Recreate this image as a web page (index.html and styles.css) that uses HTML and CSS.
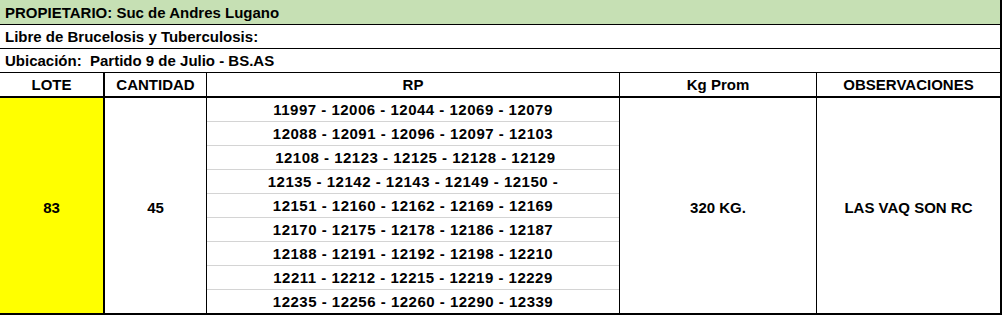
FILE: index.html
```html
<!DOCTYPE html>
<html lang="es">
<head>
<meta charset="utf-8">
<title>Lote 83</title>
<link rel="stylesheet" href="styles.css">
</head>
<body>
<div class="sheet">
  <div class="title green first">PROPIETARIO: Suc de Andres Lugano</div>
  <div class="title">Libre de Brucelosis y Tuberculosis:</div>
  <div class="title">Ubicación:&nbsp; Partido 9 de Julio - BS.AS</div>

  <div class="cols head">
    <div class="cell c-lote">LOTE</div>
    <div class="cell c-cant">CANTIDAD</div>
    <div class="cell c-rp">RP</div>
    <div class="cell c-kg">Kg Prom</div>
    <div class="cell c-obs">OBSERVACIONES</div>
  </div>

  <div class="cols data">
    <div class="cell c-lote big yellow">83</div>
    <div class="cell c-cant big">45</div>
    <div class="rp-list">
      <div class="rp">11997 - 12006 - 12044 - 12069 - 12079</div>
      <div class="rp">12088 - 12091 - 12096 - 12097 - 12103</div>
      <div class="rp">&nbsp;12108 - 12123 - 12125 - 12128 - 12129</div>
      <div class="rp">12135 - 12142 - 12143 - 12149 - 12150 -</div>
      <div class="rp">12151 - 12160 - 12162 - 12169 - 12169</div>
      <div class="rp">12170 - 12175 - 12178 - 12186 - 12187</div>
      <div class="rp">12188 - 12191 - 12192 - 12198 - 12210</div>
      <div class="rp">12211 - 12212 - 12215 - 12219 - 12229</div>
      <div class="rp">12235 - 12256 - 12260 - 12290 - 12339</div>
    </div>
    <div class="cell c-kg big">320 KG.</div>
    <div class="cell c-obs big">LAS VAQ SON RC</div>
  </div>
</div>
</body>
</html>
```
FILE: styles.css
```css
html, body {
  margin: 0;
  padding: 0;
  background: #ffffff;
}

.sheet {
  width: 1002px;
  display: flex;
  flex-direction: column;
  font-family: "Liberation Sans", Arial, sans-serif;
  font-weight: bold;
  font-size: 15px;
  color: #000;
}

.title {
  box-sizing: border-box;
  height: 24px;
  padding: 1px 0 0 5px;
  line-height: 22px;
  border-bottom: 1px solid #000;
  border-right: 2px solid #000;
  white-space: pre;
}

.title.first {
  height: 25px;
  padding-top: 2px;
}

.green {
  background: #c6e0b4;
}

.cols {
  display: grid;
  grid-template-columns: 105px 102px 413px 197px 185px;
}

.cell {
  box-sizing: border-box;
  text-align: center;
  border-right: 1px solid #000;
}

.c-lote {
  border-right-width: 2px;
}

.c-obs {
  border-right-width: 2px;
}

.head .cell {
  height: 25px;
  padding-top: 1px;
  line-height: 22px;
  border-bottom: 2px solid #000;
}

.data {
  height: 217px;
}

.data .big {
  display: flex;
  align-items: center;
  justify-content: center;
  padding-top: 3px;
  border-bottom: 2px solid #000;
}

.yellow {
  background: #ffff00;
}

.rp-list {
  display: flex;
  flex-direction: column;
  border-right: 1px solid #000;
  border-bottom: 2px solid #000;
}

.rp {
  height: 24px;
  box-sizing: border-box;
  line-height: 23px;
  text-align: center;
  letter-spacing: 0.5px;
  white-space: pre;
  border-bottom: 1px solid #d4d4d4;
}

.rp:last-child {
  border-bottom: none;
  height: 23px;
}
```
